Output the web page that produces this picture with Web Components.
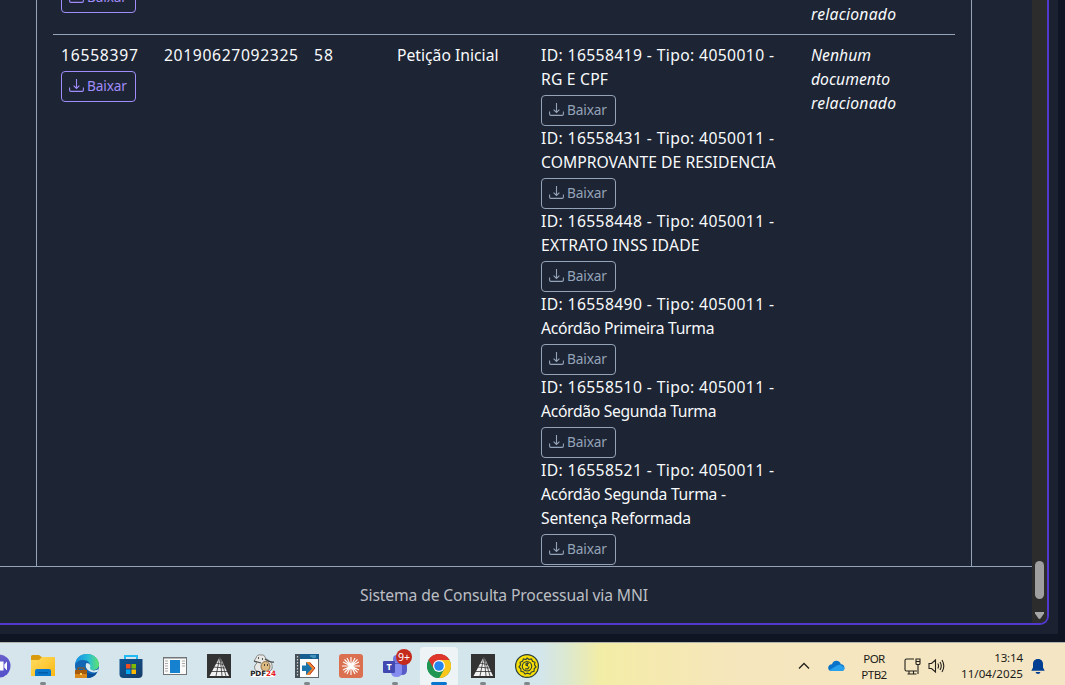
<!DOCTYPE html>
<html lang="pt-BR"><head><meta charset="utf-8"><title>Sistema de Consulta Processual via MNI</title>
<style>html,body{margin:0;height:100%;overflow:hidden;background:#0f1523}</style></head>
<body><desktop-screen></desktop-screen>
<script>
const define=(name,html,init)=>customElements.define(name,class extends HTMLElement{
 constructor(){super();this.attachShadow({mode:'open'});}
 connectedCallback(){this.shadowRoot.innerHTML=typeof html==='function'?html(this):html;if(init)init(this);}
});
/* One line of text whose tracking is adjusted to a given measure. */
define('fit-text','<style>:host{display:block;white-space:nowrap}span{display:inline-block}</style><span><slot></slot></span>',el=>{
 const s=el.shadowRoot.querySelector('span'),w=+el.getAttribute('w'),n=el.textContent.length;
 if(!w)return;
 s.style.letterSpacing=((w-s.getBoundingClientRect().width)/(n-1))+'px';
});
define('download-button',`<style>
:host{display:flex;box-sizing:border-box;width:75px;height:31px;margin-top:4px;border:1px solid currentColor;border-radius:4px;align-items:center;padding-left:7px;gap:3px;color:#94a3b8;font-size:13.7px;line-height:21px}
:host([primary]){color:#a08cfa}svg{display:block;width:15px;height:15px;flex:none;margin-top:-2px}fit-text{margin-top:-2px}
</style><svg viewBox="0 0 15 15" fill="none" stroke="currentColor" stroke-width="1.1"><path d="M.6 9.500v2.600q0 1.300 1.300 1.300h11.200q1.300 0 1.300-1.300V9.500M7.500 1v9.300M4.600 7.600l2.900 2.900 2.900-2.900"/></svg><fit-text w="40">Baixar</fit-text>`);
define('doc-entry',el=>`<style>:host{display:block}</style>${el.getAttribute('lines').split('|').map(l=>{const[t,w]=l.split('@');return`<fit-text w="${w}">${t}</fit-text>`}).join('')}<download-button></download-button>`);
define('process-row',`<style>:host{display:grid;grid-template-columns:103px 150px 83px 144px 270px 144px;box-sizing:border-box;padding:8px 0 8px 8px;border-bottom:1px solid #94a3b8;font-size:15.7px;line-height:24px;color:#f8fafc;font-weight:450}</style>
<div><slot name="id"></slot></div><div><slot name="date"></slot></div><div><slot name="num"></slot></div><div><slot name="type"></slot></div><div><slot name="docs"></slot></div><div><slot name="rel"></slot></div>`);
define('scroll-track',`<style>:host{display:flex;flex-direction:column;align-items:center;justify-content:flex-end;width:15px;background:#2c2c2c;border-bottom-right-radius:6px;box-sizing:border-box;padding-bottom:4px}
i{width:9px;height:38px;border-radius:5px;background:#9f9f9f;margin-bottom:13px}svg{display:block}</style><i></i><svg width="9" height="7"><path d="M0 0h9v1.500L5.700 6.200q-1.200 1.400-2.400 0L0 1.500z" fill="#a6a6a6"/></svg>`);
define('process-page',`<style>
:host{display:block;box-sizing:border-box;width:1058px;height:634px;padding:0 9px 9px 0;background:#1b2130;font-family:"Noto Sans",sans-serif}
.frame{display:flex;box-sizing:border-box;height:625px;border:solid #5238cc;border-width:0 2px 2px 0;border-bottom-right-radius:9px;overflow:hidden;background:#1d2433}
main{width:1032px;display:flex;flex-direction:column}
.card{box-sizing:border-box;margin-left:36px;width:936px;height:566px;border:solid #94a3b8;border-width:0 1px;overflow:hidden;padding:0 16px}
process-row:first-of-type{margin-top:-54px}
footer{flex:1;border-top:1px solid #94a3b8;display:flex;justify-content:center;box-sizing:border-box;padding:16px 24px 0 0;font-size:15.7px;line-height:24px;color:#bbbec3;font-weight:450}
em{font-style:italic;display:block}
</style><div class="frame"><main><div class="card">
<process-row><div slot="id" style="padding-top:24px"><download-button primary></download-button></div><em slot="rel" style="padding-top:48px"><fit-text w="85">relacionado</fit-text></em></process-row>
<process-row><div slot="id"><fit-text w="77">16558397</fit-text><download-button primary></download-button></div>
<fit-text slot="date" w="134">20190627092325</fit-text><fit-text slot="num" w="19">58</fit-text><fit-text slot="type" w="101.500">Petição Inicial</fit-text>
<div slot="docs">
<doc-entry lines="ID: 16558419 - Tipo: 4050010 -@233|RG E CPF@67"></doc-entry>
<doc-entry lines="ID: 16558431 - Tipo: 4050011 -@233|COMPROVANTE DE RESIDENCIA@234.500"></doc-entry>
<doc-entry lines="ID: 16558448 - Tipo: 4050011 -@233|EXTRATO INSS IDADE@158.500"></doc-entry>
<doc-entry lines="ID: 16558490 - Tipo: 4050011 -@233|Acórdão Primeira Turma@173.500"></doc-entry>
<doc-entry lines="ID: 16558510 - Tipo: 4050011 -@233|Acórdão Segunda Turma@175.500"></doc-entry>
<doc-entry lines="ID: 16558521 - Tipo: 4050011 -@233|Acórdão Segunda Turma -@185|Sentença Reformada@150"></doc-entry>
</div><em slot="rel"><fit-text w="60">Nenhum</fit-text><fit-text w="79">documento</fit-text><fit-text w="85">relacionado</fit-text></em></process-row>
</div><footer><fit-text w="288">Sistema de Consulta Processual via MNI</fit-text></footer></main><scroll-track></scroll-track></div>`);

const tri='<rect width="24" height="24" fill="#333"/><path d="M13 2.500 22 22 2.500 22z" fill="#f2f2f2"/><path d="M13 2 9 22M13 2l2 20M13 2l6 20M8.500 9l8 1.500M6 13l12 1M4 17.500l17 0" stroke="#333" stroke-width=".8" fill="none"/>';
const icons={
meet:'<defs><linearGradient id="g" y2="1"><stop stop-color="#7667c9"/><stop offset="1" stop-color="#4b4ccc"/></linearGradient></defs><circle cx="12" cy="12" r="11.500" fill="url(#g)"/><path d="M8 7.500h8.500v9H8zM17.300 10.500l2.700-3v9l-2.700-3z" fill="#fff"/>',
folder:'<defs><linearGradient id="g" x2="1" y2="1"><stop stop-color="#ffdc62"/><stop offset="1" stop-color="#fbb914"/></linearGradient></defs><path d="M0 2.500Q0 1 1.500 1H8l2.500 2H22.500Q24 3 24 4.500V9H0z" fill="#d99a0b"/><path d="M0 6H8l3-3H22.500Q24 3 24 4.500V22H0z" fill="url(#g)"/><path d="M4 22v-5q0-2 2-2h12q2 0 2 2v5z" fill="#0877cc"/><path d="M7 18h10v1.500H7z" fill="#045da6"/>',
edge:'<defs><linearGradient id="g" x2="1"><stop stop-color="#168ee5"/><stop offset=".55" stop-color="#27bdd6"/><stop offset="1" stop-color="#61e36d"/></linearGradient></defs><circle cx="12" cy="12" r="12" fill="#1266b4"/><path d="M0 11C1 3 6 0 12 0c7 0 12 5 12 10.500 0 4-3 5.500-6 5.500-3 0-5-1-3.500-3.500C16 9 13 6 8 6 4 6 1 8 0 11z" fill="url(#g)"/><path d="M11.500 9c-3 5 3 11 11 9l1-3c-5 3-10 1-8-3-.5-2-2-3-4-3z" fill="#d9eaf0"/><path d="M11 18q6 4 11 0-2 6-11 6z" fill="#094b94"/><rect y="16" width="12" height="8" fill="#d9891b"/><path d="M0 16h12v4H0z" fill="#a75b0a"/><path d="M3 16v-2h6v2" fill="none" stroke="#a15607" stroke-width="1.200"/><path d="M5 19h2v2H5z" fill="#ffd358"/>',
store:'<defs><linearGradient id="g" x2="1" y2="1"><stop stop-color="#0c5797"/><stop offset="1" stop-color="#183b67"/></linearGradient></defs><path d="M6 6V2h12v4" fill="none" stroke="#23b9f3" stroke-width="2"/><path d="M0.500 5h23v15q0 4-4 4H4.500q-4 0-4-4z" fill="url(#g)"/><path d="M7 10h4.500v4.500H7z" fill="#f04d20"/><path d="M12.500 10H17v4.500h-4.500z" fill="#7fba00"/><path d="M7 15.500h4.500V20H7z" fill="#00a4ef"/><path d="M12.500 15.500H17V20h-4.500z" fill="#ffb900"/>',
win:'<rect x=".5" y="3.500" width="23" height="17" fill="#fafafa" stroke="#707476"/><path d="M0 4h24" stroke="#777"/><path d="M7 6h10v13H7z" fill="#1681ce"/><path d="M2 7h3M2 9.500h3M2 12h3M2 14.500h3M2 17h3M19 7h3M19 9.500h3M19 12h3" stroke="#aaa"/>',
tri,
pdf:'<path d="M5 4q1-4 5-3 3-1 4 2 1 3 3 3 5 2 4 9-2 3-6 3H6Q1 13 6 9L3 7z" fill="#e8e8e6" stroke="#71716f" stroke-width=".8"/><path d="M3 7l7 2M14 5q5 4 9 3" stroke="#444" stroke-width="1.200" fill="none"/><ellipse cx="14.500" cy="12.500" rx="4.500" ry="5" fill="#dcba82" stroke="#846d4b"/><path d="M7 4h1M11 5h1M13 11h1M16 11h1" stroke="#222" stroke-width="1.300"/><rect x="0" y="17" width="24" height="6" fill="#fff"/>',
arrow:'<rect x=".5" y=".5" width="23" height="23" fill="#fff" stroke="#606970"/><path d="M0 0h24v5H0z" fill="#185f91"/><path d="M0 0h5v24H0z" fill="#455057"/><path d="M2.500 2v21" stroke="#cbd0d3" stroke-width="1.200" stroke-dasharray="1.500 1.500"/><path d="M15 2h2m1-1v3m2-3v3" stroke="#66c5e5"/><path d="M11 8h4l5 6-5 7h-4l3-7z" fill="#ed842d"/><path d="M15 9l5 5-5 6" fill="none" stroke="#bb3b27"/><path d="M7 11.500h4V8l6 6.500-6 6.500v-4H7z" fill="#1b75aa"/>',
claude:'<rect width="24" height="24" rx="3" fill="#da704f"/><path d="M12 3v18M3 12h18M5.500 5.500l13 13M18.500 5.500l-13 13M8 4l8 16M4 8l16 8M4 16l16-8M8 20l8-16" stroke="#fff" stroke-width="1.100"/>',
teams:'<circle cx="14" cy="5" r="4" fill="#7476dc"/><path d="M8 9h13q3 0 3 3v4q0 5-5 5h-1Z" fill="#565bc7"/><path d="M8 10h11v8q0 5-5.500 5T8 18z" fill="#858cf0"/><rect y="7" width="12" height="12" rx="1" fill="#4248b1"/>',
chrome:'<circle cx="12" cy="12" r="12" fill="#209653"/><path d="M12 12 1.610 6A12 12 0 0 1 22.390 6z" fill="#df352b"/><path d="M12 12V6h10.400A12 12 0 0 1 12 24l5.200-9z" fill="#fdc61b"/><path d="M1.610 6A12 12 0 0 0 12 24l5.200-9H6.800z" fill="#209653"/><path d="M1.610 6A12 12 0 0 1 22.390 6H12L7 15z" fill="#df352b"/><circle cx="12" cy="12" r="6" fill="#fff"/><circle cx="12" cy="12" r="4.800" fill="#2785ed"/>',
badge:'<circle cx="12" cy="12" r="11.400" fill="#f9df05" stroke="#293e3d" stroke-width="1.200"/><path d="M12 4l2 1.500 2.500-.5 1 2.300 2.400 1-.4 2.500L21 13l-1.800 1.800-.2 2.500-2.500.7-1.500 2-2.500-.9-2.500.9-1.500-2-2.500-.7-.2-2.500L4 13l1.500-2.200-.4-2.500 2.400-1 1-2.300 2.500.5z" fill="none" stroke="#354735" stroke-width="1.200"/><circle cx="12" cy="12.300" r="4.700" fill="none" stroke="#354735" stroke-width="1.200"/><path d="M13.800 9.500c-3.500-.8-3.500 1.500-2 2.300M12.500 8.500v4M10 14.800q4 .8 4-2.300" fill="none" stroke="#354735" stroke-width="1.200"/>'};
define('app-icon',el=>`<style>:host{display:flex;position:relative;width:38px;height:38px;margin:0 3px;align-items:center;justify-content:center;border-radius:4px 4px 0 0;flex:none;box-sizing:border-box;font-family:"Noto Sans",sans-serif}:host([active]){background:#eef4f6}svg{width:24px;height:24px;display:block;overflow:visible}
i{position:absolute;bottom:0;left:16px;width:6px;height:3px;border-radius:2px;background:#7f878b}:host([active]) i{left:11px;width:16px;background:#0875ce}:host([off]) i{display:none}
b{position:absolute;display:flex;align-items:center;justify-content:center;white-space:nowrap}
.n{left:20px;top:2px;width:16px;height:16px;border-radius:8px;background:#c42b1c;color:#fff;font-size:10.500px;font-weight:400}.t{left:7px;top:14px;width:12px;height:12px;color:#fff;font-size:9px;line-height:12px}.p{left:7px;top:23px;width:24px;height:8px;color:#222;font:700 7.200px/8px "DejaVu Sans",sans-serif;letter-spacing:-.1px}.p em{font-style:normal;color:#e51b22}
</style><svg viewBox="0 0 24 24">${icons[el.getAttribute('kind')]}</svg>${el.getAttribute('kind')==='teams'?'<b class="t">T</b><b class="n">9+</b>':''}${el.getAttribute('kind')==='pdf'?'<b class="p">PDF<em>24</em></b>':''}<i></i>`);
define('task-bar',`<style>
:host{display:flex;box-sizing:border-box;height:43px;border-top:1px solid #b1b5ae;background:linear-gradient(90deg,#d5e5eb 0,#d3e6ec 540px,#dbe8d1 565px,#f2eda6 600px,#f5eaad 640px,#f5e6bd 740px,#f4e6c5 100%);font:11.600px/16px "Noto Sans",sans-serif;color:#1c1b18}
.apps{display:flex;margin-left:-23px;padding-top:4px;width:798px;flex:none}
.tray{display:flex;flex:1}.tray svg{display:block;flex:none}.up{margin:19px 0 0 23px}.cloud{margin:17px 0 0 18px}
.lang{display:flex;flex-direction:column;align-items:center;width:30px;margin:8px 0 0 14px}.net{margin:15px 0 0 15px}.snd{margin:15px 0 0 7px}.clock{display:flex;flex-direction:column;align-items:flex-end;width:64px;margin:7px 0 0 14px}.bell{margin:16px 0 0 8px}
</style><div class="apps"><app-icon kind="meet" off></app-icon><app-icon kind="folder"></app-icon><app-icon kind="edge" off></app-icon><app-icon kind="store" off></app-icon><app-icon kind="win" off></app-icon><app-icon kind="tri" off></app-icon><app-icon kind="pdf" off></app-icon><app-icon kind="arrow"></app-icon><app-icon kind="claude" off></app-icon><app-icon kind="teams"></app-icon><app-icon kind="chrome" active></app-icon><app-icon kind="tri"></app-icon><app-icon kind="badge"></app-icon></div>
<div class="tray"><svg class="up" width="12" height="8"><path d="M1 6.500 6 1.500l5 5" fill="none" stroke="#24211c" stroke-width="1.300"/></svg>
<svg class="cloud" width="17" height="12"><path d="M4 11Q0 11 .2 7.500.5 4.500 4 4.200 5 .5 8.500.7q3.300.2 4.400 3.500Q16.300 4.500 16.500 8q0 3-3.500 3z" fill="#0873c9"/><path d="M1.500 10 9 5.500q3-1.700 5 .5 2.500.5 2.500 2.700Q16 11 13 11H4z" fill="#28a1ed"/></svg>
<div class="lang"><fit-text w="22">POR</fit-text><fit-text w="26">PTB2</fit-text></div>
<svg class="net" width="17" height="17" fill="none" stroke="#24211c" stroke-width="1.100"><path d="M10 1H2.500Q1 1 1 2.500v9Q1 13 2.500 13H13M5 13v3M9.500 13v3M3.500 16h9M12 1h4v4.500q0 1-1 1h-2q-1 0-1-1zM12 3.500h4M14 6.500V16"/></svg>
<svg class="snd" width="17" height="16" fill="none" stroke="#24211c" stroke-width="1.100"><path d="M1 5.500h2.500L7.500 2v12l-4-3.500H1zM9.800 5.500q1.500 2.500 0 5M12 4q2.500 4 0 8M14 2q3.600 6 0 12"/></svg>
<div class="clock"><fit-text w="29">13:14</fit-text><fit-text w="62">11/04/2025</fit-text></div>
<svg class="bell" width="14" height="16"><path d="M7 0C3.500 0 2 2.500 2 5v3.500L.3 11.700h13.400L12 8.500V5c0-2.500-1.500-5-5-5zM4.500 13h5Q9 15 7 15t-2.500-2z" fill="#003e92"/></svg></div>`);
define('desktop-screen',`<style>:host{display:flex;flex-direction:column;width:1065px;height:685px;overflow:hidden;background:#0f1523}process-page{margin-bottom:8px;flex:none}task-bar{flex:none}</style><process-page></process-page><task-bar></task-bar>`);
</script></body></html>
